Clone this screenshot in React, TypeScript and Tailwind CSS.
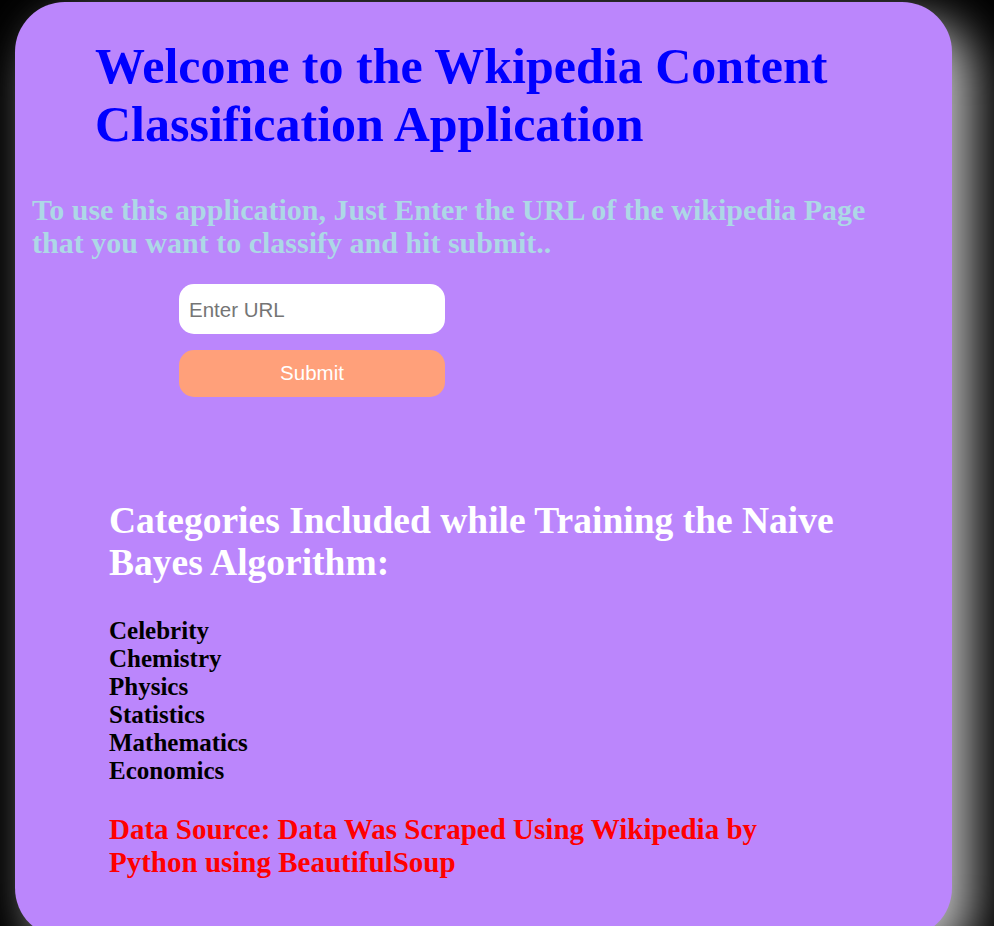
const categories = ["Celebrity", "Chemistry", "Physics", "Statistics", "Mathematics", "Economics"];

const App = () => {
	return (
		<div className="min-h-screen w-full overflow-hidden bg-black pl-[15px] pt-[2px]">
			<div className="flex h-[936px] w-[937px] flex-col rounded-[50px] bg-[#bb86fc] font-['Liberation_Serif',serif] font-bold shadow-[20px_20px_50px_#c0c0c0]">
				<h1 className="ml-[80px] mt-[36px] text-[50px] leading-[57.5px] text-[#0000ff]">
					Welcome to the Wkipedia Content Classification Application
				</h1>
				<p className="ml-[17px] mr-[40px] mt-[40px] text-[30px] leading-[33px] text-[#add8e6]">
					To use this application, Just Enter the URL of the wikipedia Page that you want to classify and hit submit..
				</p>
				<form className="ml-[164px] mt-[25px] flex w-[266px] flex-col gap-[16px] font-['Liberation_Sans',Arial,sans-serif] font-normal">
					<input
						type="text"
						placeholder="Enter URL"
						className="h-[50px] w-full rounded-[15px] bg-white px-[10px] pt-[2px] text-[20.5px] text-black outline-none placeholder:text-[#757575]"
					/>
					<button type="button" className="h-[47px] w-full rounded-[15px] bg-[#ffa07a] text-[20.5px] text-white">
						Submit
					</button>
				</form>
				<div className="ml-[94px] mr-[100px] mt-[103px] flex flex-col">
					<h2 className="text-[37.5px] leading-[42px] text-white">
						Categories Included while Training the Naive Bayes Algorithm:
					</h2>
					<ul className="mt-[33px] text-[25px] leading-[28px] text-black">
						{categories.map(c => (
							<li key={c}>{c}</li>
						))}
					</ul>
					<p className="mt-[28px] text-[29px] leading-[32.5px] text-[#ff0000]">
						Data Source: Data Was Scraped Using Wikipedia by Python using BeautifulSoup
					</p>
				</div>
			</div>
		</div>
	);
};

export default App;
